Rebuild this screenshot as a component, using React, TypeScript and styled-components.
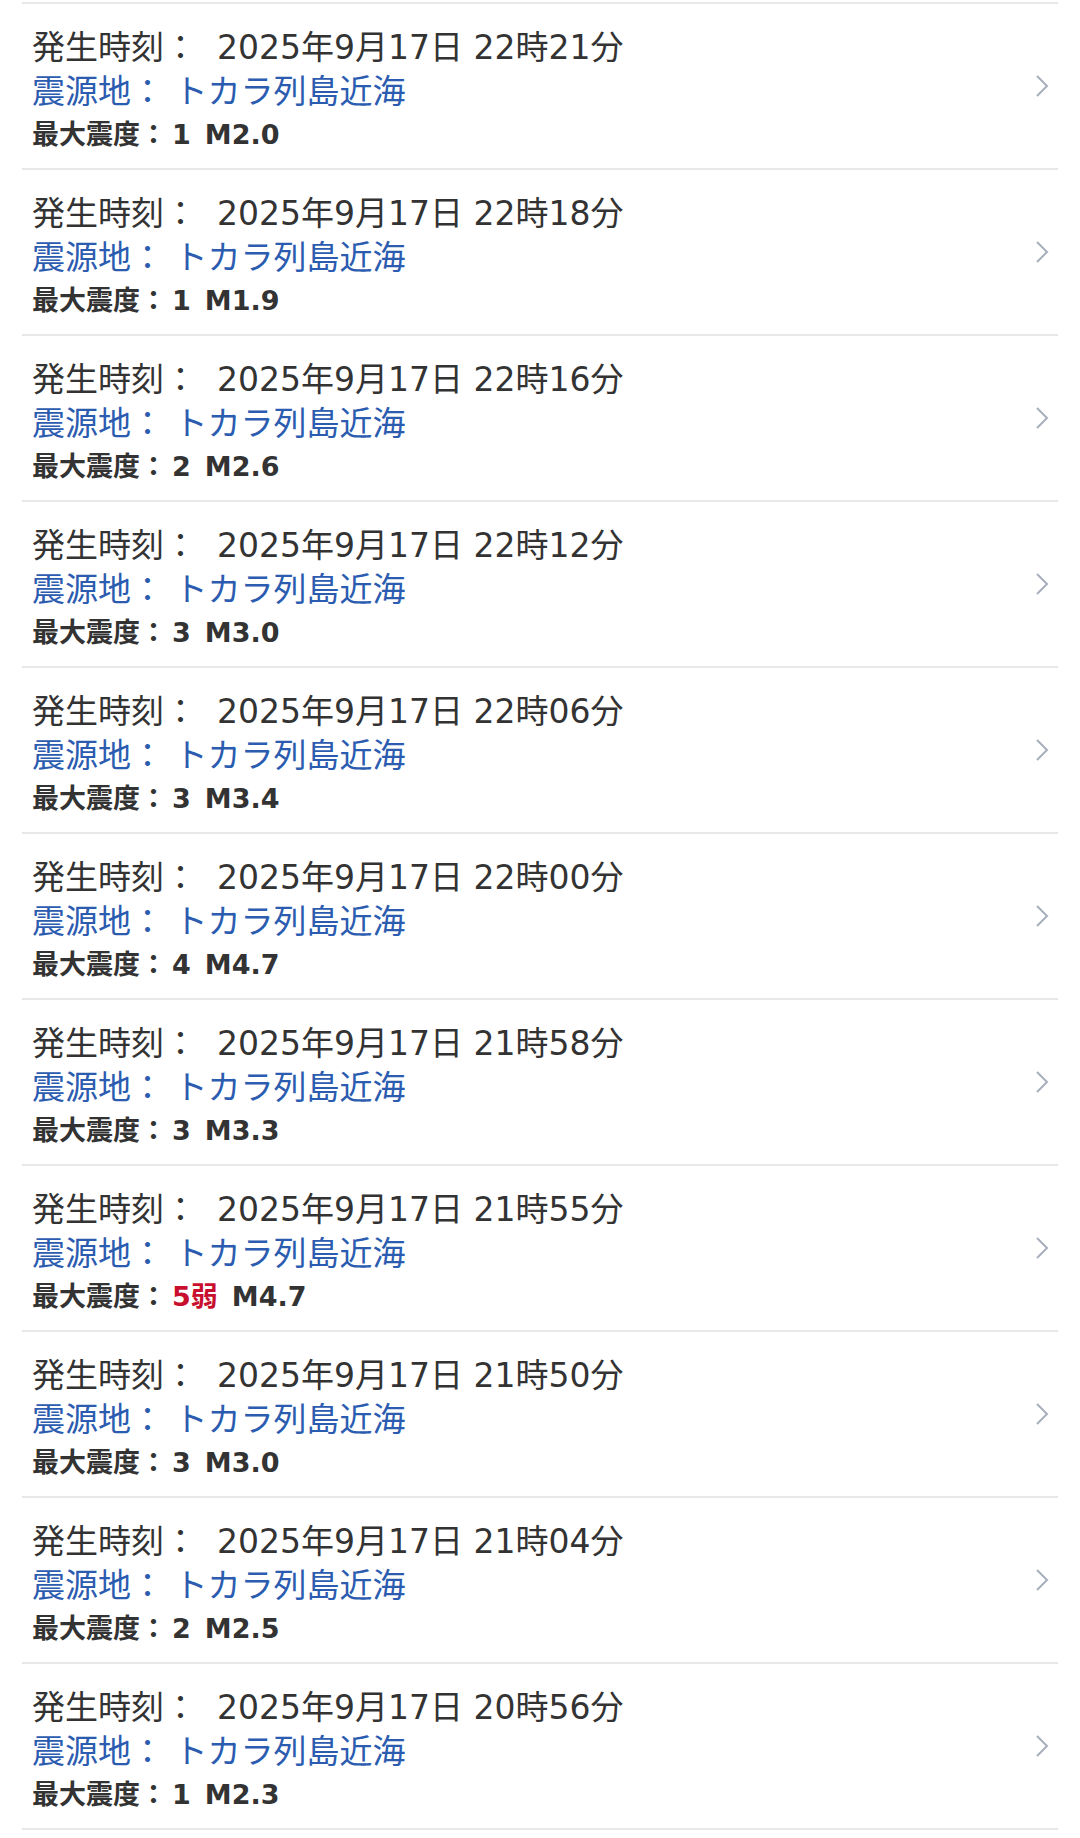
import React from 'react';
import styled, { createGlobalStyle } from 'styled-components';

const GlobalStyle = createGlobalStyle`
  html, body {
    margin: 0;
    padding: 0;
    background: #ffffff;
  }
  body {
    font-family: "DejaVu Sans", "Noto Sans CJK JP", sans-serif;
    color: #333333;
  }
`;

const List = styled.ul`
  list-style: none;
  margin: 0;
  padding: 2px 22px 0 22px;
`;

const Item = styled.li`
  display: flex;
  align-items: center;
  border-top: 2px solid #e8e8e8;
  padding: 17px 9px 17px 10px;
  &:last-child {
    border-bottom: 2px solid #e8e8e8;
  }
`;

const Body = styled.div`
  flex: 1;
  min-width: 0;
  padding-top: 5px;
`;

const TimeLine = styled.div`
  font-size: 33px;
  line-height: 44px;
  color: #333333;
  white-space: nowrap;
`;

const TimeValue = styled.span`
  margin-left: 20px;
`;

const PlaceLine = styled.div`
  font-size: 33px;
  line-height: 44px;
  color: #2b5cb0;
  white-space: nowrap;
`;

const InfoLine = styled.div`
  margin-top: 5px;
  font-size: 27px;
  line-height: 32px;
  font-weight: 700;
  color: #333333;
  white-space: nowrap;
`;

const Intensity = styled.span<{ strong: boolean }>`
  margin-left: 5px;
  color: ${props => props.strong ? '#c8102e' : '#333333'};
`;

const Magnitude = styled.span`
  margin-left: 14px;
`;

const Chevron = styled.svg`
  flex: none;
  width: 14px;
  height: 24px;
`;

interface Quake {
    time: string;
    intensity: string;
    magnitude: string;
}

const quakes: Quake[] = [
    { time: '22時21分', intensity: '1', magnitude: 'M2.0' },
    { time: '22時18分', intensity: '1', magnitude: 'M1.9' },
    { time: '22時16分', intensity: '2', magnitude: 'M2.6' },
    { time: '22時12分', intensity: '3', magnitude: 'M3.0' },
    { time: '22時06分', intensity: '3', magnitude: 'M3.4' },
    { time: '22時00分', intensity: '4', magnitude: 'M4.7' },
    { time: '21時58分', intensity: '3', magnitude: 'M3.3' },
    { time: '21時55分', intensity: '5弱', magnitude: 'M4.7' },
    { time: '21時50分', intensity: '3', magnitude: 'M3.0' },
    { time: '21時04分', intensity: '2', magnitude: 'M2.5' },
    { time: '20時56分', intensity: '1', magnitude: 'M2.3' },
];

const App: React.FC = () => {
    // intensity 5弱 and above is shown in red
    const isStrong = (intensity: string) => parseInt(intensity, 10) >= 5;

    return (
        <>
            <GlobalStyle />
            <List>
                {quakes.map((q, i) => (
                    <Item key={i}>
                        <Body>
                            <TimeLine>
                                発生時刻：
                                <TimeValue>2025年9月17日 {q.time}</TimeValue>
                            </TimeLine>
                            <PlaceLine>震源地： トカラ列島近海</PlaceLine>
                            <InfoLine>
                                最大震度：
                                <Intensity strong={isStrong(q.intensity)}>{q.intensity}</Intensity>
                                <Magnitude>{q.magnitude}</Magnitude>
                            </InfoLine>
                        </Body>
                        <Chevron viewBox="0 0 14 24">
                            <path d="M2 2 L12 12 L2 22" fill="none" stroke="#a7aebc" strokeWidth="2" />
                        </Chevron>
                    </Item>
                ))}
            </List>
        </>
    );
};

export default App;
